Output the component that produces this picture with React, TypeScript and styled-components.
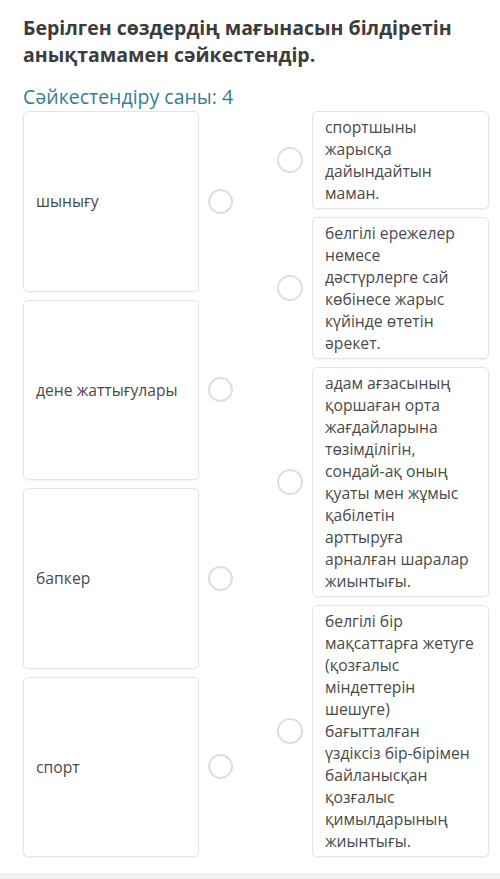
import React from "react";
import styled, { createGlobalStyle } from "styled-components";

const GlobalStyle = createGlobalStyle`
  html, body { margin: 0; padding: 0; background: #ffffff; }
  body { font-family: "Open Sans", "Noto Sans", sans-serif; }
  * { box-sizing: border-box; }
`;

const Page = styled.div`
  width: 500px;
  height: 879px;
  overflow: hidden;
  display: flex;
  flex-direction: column;
  background: #ffffff;
`;

const Content = styled.div`
  padding: 14px 11px 0 23px;
  flex: 1;
  min-height: 0;
`;

const Title = styled.h1`
  margin: 0;
  font-size: 19.5px;
  line-height: 27px;
  font-weight: 700;
  color: #3c3c3c;
`;

const Subtitle = styled.div`
  margin-top: 16px;
  font-size: 19.5px;
  line-height: 26px;
  color: #347d97;
`;

const Match = styled.div`
  margin-top: 1px;
  display: grid;
  grid-template-columns: 210px 212px;
  column-gap: 44px;
`;

const Column = styled.div`
  display: flex;
  flex-direction: column;
  gap: 8px;
`;

const Row = styled.div<{ $stretch?: boolean }>`
  display: flex;
  align-items: center;
  gap: 9px;
  flex: ${(p) => (p.$stretch ? "1 1 0" : "0 0 auto")};
`;

const Card = styled.div<{ $left?: boolean }>`
  width: 177px;
  align-self: stretch;
  border: 1px solid #e5e5e5;
  border-radius: 5px;
  box-shadow: 0 1px 2px rgba(0, 0, 0, 0.05);
  background: #fff;
  color: #4a4a4a;
  font-size: 15.7px;
  line-height: 22px;
  padding: ${(p) => (p.$left ? "0 12px" : "4px 12px")};
  display: flex;
  align-items: ${(p) => (p.$left ? "center" : "flex-start")};
`;

const Circle = styled.span<{ $size: number }>`
  flex: 0 0 auto;
  width: ${(p) => p.$size}px;
  height: ${(p) => p.$size}px;
  border-radius: 50%;
  border: 2px solid #dedede;
  background: #fff;
`;

const Footer = styled.div`
  flex: 0 0 6px;
  background: #f1f1f1;
`;

const leftItems = ["шынығу", "дене жаттығулары", "бапкер", "спорт"];

const rightItems = [
  "спортшыны жарысқа дайындайтын маман.",
  "белгілі ережелер немесе дәстүрлерге сай көбінесе жарыс күйінде өтетін әрекет.",
  "адам ағзасының қоршаған орта жағдайларына төзімділігін, сондай-ақ оның қуаты мен жұмыс қабілетін арттыруға арналған шаралар жиынтығы.",
  "белгілі бір мақсаттарға жетуге (қозғалыс міндеттерін шешуге) бағытталған үздіксіз бір-бірімен байланысқан қозғалыс қимылдарының жиынтығы.",
];

export default function App() {
  return (
    <Page>
      <GlobalStyle />
      <Content>
        <Title>Берілген сөздердің мағынасын білдіретін анықтамамен сәйкестендір.</Title>
        <Subtitle>Сәйкестендіру саны: 4</Subtitle>
        <Match>
          <Column>
            {leftItems.map((t) => (
              <Row key={t} $stretch>
                <Card $left>{t}</Card>
                <Circle $size={25} />
              </Row>
            ))}
          </Column>
          <Column>
            {rightItems.map((t) => (
              <Row key={t}>
                <Circle $size={26} />
                <Card>{t}</Card>
              </Row>
            ))}
          </Column>
        </Match>
      </Content>
      <Footer />
    </Page>
  );
}
